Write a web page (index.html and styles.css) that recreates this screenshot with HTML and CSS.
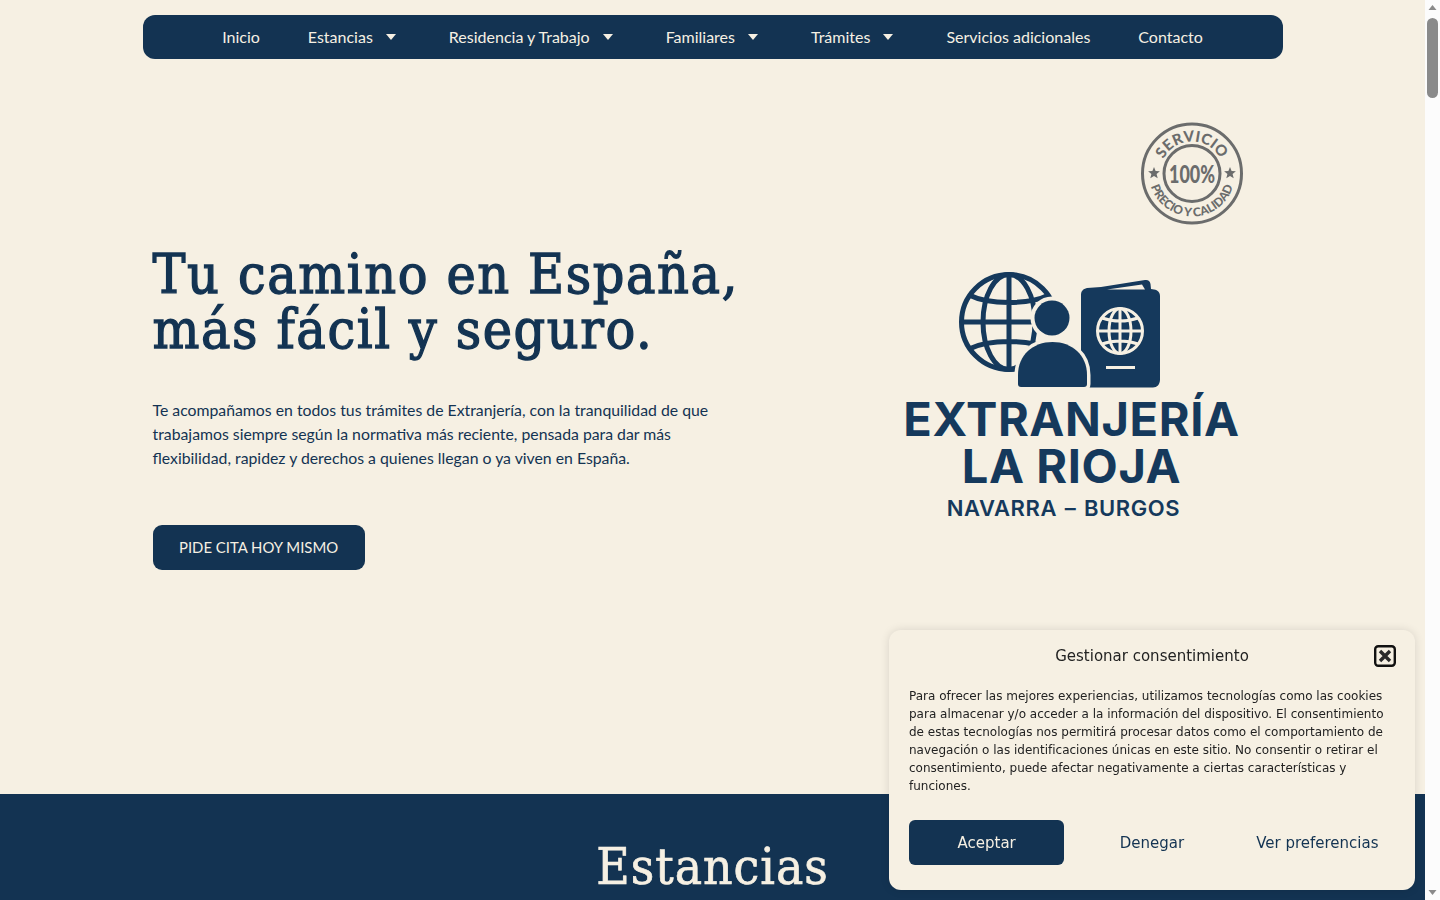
FILE: index.html
```html
<!DOCTYPE html>
<html lang="es">
<head>
<meta charset="utf-8">
<title>Extranjería La Rioja</title>
<link rel="stylesheet" href="styles.css">
</head>
<body>
<div class="window">
<div class="page">
<header class="site-header">
  <nav class="main-nav">
    <a class="nav-item" href="#">Inicio</a>
    <a class="nav-item" href="#">Estancias<svg class="caret" viewBox="0 0 10 6"><path d="M0 0h10L5 6z"/></svg></a>
    <a class="nav-item" href="#">Residencia y Trabajo<svg class="caret" viewBox="0 0 10 6"><path d="M0 0h10L5 6z"/></svg></a>
    <a class="nav-item" href="#">Familiares<svg class="caret" viewBox="0 0 10 6"><path d="M0 0h10L5 6z"/></svg></a>
    <a class="nav-item" href="#">Trámites<svg class="caret" viewBox="0 0 10 6"><path d="M0 0h10L5 6z"/></svg></a>
    <a class="nav-item" href="#">Servicios adicionales</a>
    <a class="nav-item" href="#">Contacto</a>
  </nav>
</header>

<main class="content">
  <section class="hero">
    <div class="hero-copy">
      <h1 class="hero-title">Tu camino en España,<br>más fácil y seguro.</h1>
      <p class="hero-text">Te acompañamos en todos tus trámites de Extranjería, con la tranquilidad de que trabajamos siempre según la normativa más reciente, pensada para dar más flexibilidad, rapidez y derechos a quienes llegan o ya viven en España.</p>
      <a class="cta" href="#">PIDE CITA HOY MISMO</a>
    </div>
    <div class="hero-brand">
      <svg class="stamp" viewBox="1141 122 102 103">
        <defs>
          <path id="arc-top" d="M1160 173.500a32 32 0 0 1 64 0"/>
          <path id="arc-bottom" d="M1149 173.500a43 43 0 0 0 86 0"/>
        </defs>
        <circle class="stamp-ring" cx="1192" cy="173.500" r="49.500"/>
        <circle class="stamp-ring" cx="1192" cy="173.500" r="28"/>
        <text class="stamp-top"><textPath href="#arc-top" startOffset="50%">SERVICIO</textPath></text>
        <text class="stamp-bottom"><textPath href="#arc-bottom" startOffset="50%">PRECIO Y CALIDAD</textPath></text>
        <text class="stamp-pct" x="1192" y="182.500" textLength="46" lengthAdjust="spacingAndGlyphs">100%</text>
        <path class="stamp-star" d="M1154 167l1.600 4 4.300.3-3.300 2.700 1.100 4.200-3.700-2.300-3.700 2.300 1.100-4.200-3.300-2.700 4.300-.3z"/>
        <path class="stamp-star" d="M1230 167l1.600 4 4.300.3-3.300 2.700 1.100 4.200-3.700-2.300-3.700 2.300 1.100-4.200-3.300-2.700 4.300-.3z"/>
      </svg>
      <div class="logo">
        <svg class="logo-mark" viewBox="956 270 205 119">
          <g class="globe">
            <circle cx="1008" cy="322" r="47.500"/>
            <ellipse cx="1008" cy="322" rx="26" ry="47.500"/>
            <path d="M1008 275v94M960 322h92M968 295c20 10 60 10 80 0M968 349c20-10 60-10 80 0"/>
          </g>
          <path class="passport" d="M1080 295c0-4 2-6 6-7l14-1 44-7c3-.5 5 1 5.500 4l.5 5 3 .5c4 .7 6 3 6 7v83c0 5-3 8-7 8h-72z"/>
          <path class="flap" d="M1106 289.500l35-5 3 5z"/>
          <g class="pass-globe">
            <circle cx="1119" cy="331" r="22.500"/>
            <ellipse cx="1119" cy="331" rx="11" ry="22.500"/>
            <path d="M1119 308v46M1096 331h46M1101 318c11 4 25 4 36 0M1101 344c11-4 25-4 36 0"/>
          </g>
          <path class="pass-line" d="M1105 367.500h29"/>
          <circle class="person-head" cx="1051" cy="318" r="17.500"/>
          <path class="person-body" d="M1017 384v-9c0-20 15-33 34.500-33s34.500 13 34.500 33v9c0 2-1 3-3 3h-63c-2 0-3-1-3-3z"/>
        </svg>
        <div class="logo-name">EXTRANJERÍA</div>
        <div class="logo-sub">LA RIOJA</div>
        <div class="logo-region">NAVARRA – BURGOS</div>
      </div>
    </div>
  </section>
  <section class="stays">
    <h2 class="stays-title">Estancias</h2>
  </section>
</main>
</div>
<div class="scrollbar">
  <svg class="scroll-arrow" viewBox="0 0 15 15"><path d="M3.500 10h8l-4-5z"/></svg>
  <div class="scroll-track"><div class="scroll-thumb"></div></div>
  <svg class="scroll-arrow" viewBox="0 0 15 15"><path d="M3.500 5h8l-4 5z"/></svg>
</div>
</div>

<aside class="consent">
  <div class="consent-head">
    <span class="consent-title">Gestionar consentimiento</span>
    <button class="consent-close" aria-label="Cerrar">
      <svg viewBox="0 0 22 22"><rect x="1.200" y="1.200" width="19.600" height="19.600" rx="3" class="close-box"/><path d="M6 6l10 10M16 6L6 16" class="close-x"/></svg>
    </button>
  </div>
  <p class="consent-text">Para ofrecer las mejores experiencias, utilizamos tecnologías como las cookies para almacenar y/o acceder a la información del dispositivo. El consentimiento de estas tecnologías nos permitirá procesar datos como el comportamiento de navegación o las identificaciones únicas en este sitio. No consentir o retirar el consentimiento, puede afectar negativamente a ciertas características y funciones.</p>
  <div class="consent-actions">
    <button class="consent-btn accept">Aceptar</button>
    <button class="consent-btn">Denegar</button>
    <button class="consent-btn">Ver preferencias</button>
  </div>
</aside>
</body>
</html>
```
FILE: styles.css
```css
* { box-sizing: border-box; }
html, body { margin: 0; padding: 0; height: 100%; overflow: hidden; }
body {
  background: #f6f0e3;
  color: #133352;
  font-family: "Lato", sans-serif;
  font-size: 16px;
}
.window {
  display: flex;
  height: 100%;
}
.page {
  flex: 1;
  min-width: 0;
  display: flex;
  flex-direction: column;
  overflow: hidden;
}
.scrollbar {
  flex: none;
  width: 15px;
  background: #fcfcfc;
  display: flex;
  flex-direction: column;
}
.scroll-arrow {
  flex: none;
  width: 15px;
  height: 15px;
  fill: #8a8a8a;
}
.scroll-track {
  flex: 1;
  padding: 3px 2px;
}
.scroll-thumb {
  width: 11px;
  height: 80px;
  background: #8a8a8a;
  border-radius: 6px;
}
.site-header {
  flex: none;
  width: 1140px;
  margin: 0 auto;
  padding-top: 15px;
}
.main-nav {
  display: flex;
  justify-content: center;
  height: 44px;
  background: #133352;
  border-radius: 12px;
}
.nav-item {
  display: flex;
  align-items: center;
  padding: 0 24px 2px;
  color: #f6f0e3;
  text-decoration: none;
  font-size: 16px;
}
.caret {
  width: 10px;
  height: 6px;
  margin: 2px 5px 0 13px;
  fill: #f6f0e3;
}
.content {
  flex: 1;
  display: flex;
  flex-direction: column;
}
.hero {
  flex: none;
  width: 1140px;
  height: 735px;
  margin: 0 auto;
  display: grid;
  grid-template-columns: 606px 1fr;
}
.hero-copy {
  padding: 188px 0 0 10px;
}
.hero-title {
  margin: 0 0 41px;
  font-family: "DejaVu Serif Condensed", "DejaVu Serif", serif;
  font-weight: 400;
  font-size: 55px;
  letter-spacing: 1.600px;
  -webkit-text-stroke: 1.300px #133352;
  line-height: 55px;
  white-space: nowrap;
  color: #133352;
}
.hero-text {
  margin: 0 0 55px;
  width: 586px;
  font-size: 15.800px;
  line-height: 24px;
}
.cta {
  display: inline-block;
  padding: 0 26.500px;
  height: 45px;
  line-height: 45px;
  border-radius: 9px;
  background: #133352;
  color: #f6f0e3;
  text-decoration: none;
  font-size: 14.900px;
}
.hero-brand {
  padding-top: 63px;
  display: flex;
  flex-direction: column;
}
.stamp {
  width: 102px;
  height: 103px;
  align-self: flex-end;
  margin-right: 40px;
}
.stamp-ring {
  fill: none;
  stroke: #6b6c6c;
  stroke-width: 3;
}
.stamp-top, .stamp-bottom, .stamp-pct {
  font-family: "Lato", sans-serif;
  font-weight: 900;
  fill: #6b6c6c;
  text-anchor: middle;
}
.stamp-top { font-size: 15px; letter-spacing: .3px; }
.stamp-bottom { font-size: 12px; }
.stamp-pct { font-size: 25px; font-weight: 900; }
.stamp-star { fill: #6b6c6c; }
.logo {
  margin-top: 45px;
  display: flex;
  flex-direction: column;
  align-items: center;
  width: 340px;
  margin-left: 153px;
  color: #15395c;
  font-family: "Inter", sans-serif;
  font-weight: 700;
}
.logo-mark {
  width: 205px;
  height: 119px;
  margin: 0 24px 5px 0;
  flex: none;
}
.globe {
  fill: none;
  stroke: #15395c;
  stroke-width: 5;
}
.passport { fill: #15395c; }
.flap { fill: #f6f0e3; }
.pass-globe { fill: none; stroke: #f6f0e3; stroke-width: 3; }
.pass-line { stroke: #f6f0e3; stroke-width: 3; }
.person-head { fill: #15395c; stroke: #f6f0e3; stroke-width: 8; paint-order: stroke; }
.person-body { fill: #15395c; stroke: #f6f0e3; stroke-width: 7; paint-order: stroke; }
.logo-name {
  font-size: 47px;
  line-height: 50px;
  letter-spacing: .6px;
  white-space: nowrap;
}
.logo-sub {
  font-size: 47px;
  line-height: 44px;
  letter-spacing: .6px;
  white-space: nowrap;
}
.logo-region {
  margin-top: 8px;
  font-size: 22px;
  line-height: 24px;
  font-weight: 600;
  letter-spacing: .6px;
  word-spacing: 1.500px;
  margin-right: 16px;
  white-space: nowrap;
}
.stays {
  flex: 1;
  background: #133352;
  padding-top: 40px;
}
.stays-title {
  margin: 0;
  text-align: center;
  font-family: "DejaVu Serif Condensed", "DejaVu Serif", serif;
  font-weight: 400;
  font-size: 51px;
  letter-spacing: 1px;
  -webkit-text-stroke: .7px #f6f0e3;
  line-height: 66px;
  color: #f6f0e3;
}
.consent {
  position: fixed;
  right: 25px;
  bottom: 10px;
  width: 526px;
  height: 260px;
  padding: 0 20px;
  background: #f6f0e3;
  border-radius: 12px;
  box-shadow: 0 0 10px rgba(0,0,0,.12);
  font-family: "DejaVu Sans", sans-serif;
  color: #222;
}
.consent-head {
  position: relative;
  height: 51px;
  display: flex;
  align-items: center;
  justify-content: center;
}
.consent-title { font-size: 15px; }
.consent-close {
  position: absolute;
  top: 15px;
  right: -1px;
  width: 22px;
  height: 22px;
  padding: 0;
  border: 0;
  background: none;
}
.consent-close svg { display: block; }
.close-box { fill: none; stroke: #111; stroke-width: 2.400; }
.close-x { fill: none; stroke: #2a2a2a; stroke-width: 3.400; }
.consent-text {
  margin: 6px 0 0;
  font-size: 12px;
  line-height: 18px;
}
.consent-actions {
  margin-top: 25px;
  display: grid;
  grid-template-columns: repeat(3, 1fr);
  gap: 10px;
}
.consent-btn {
  height: 45px;
  border: 0;
  border-radius: 6px;
  background: transparent;
  color: #133352;
  font-family: "DejaVu Sans", sans-serif;
  font-size: 15px;
  padding: 0;
}
.consent-btn.accept { background: #133352; color: #f6f0e3; }
```
